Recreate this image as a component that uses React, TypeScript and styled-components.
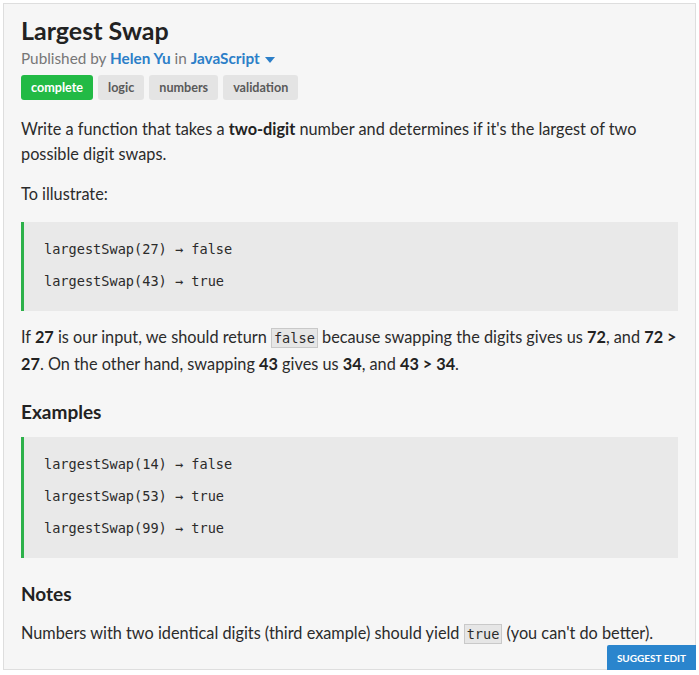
import styled, { createGlobalStyle } from 'styled-components';

const GlobalStyle = createGlobalStyle`
  body {
    margin: 0;
    background: #ffffff;
    font-family: Lato, "Open Sans", sans-serif;
  }
`;

const Panel = styled.div`
  position: relative;
  margin: 3px;
  padding: 11px 17px 22px;
  background: #f6f6f6;
  border: 1px solid #dedede;
  color: #2b2b2b;
`;

const Title = styled.h1`
  margin: 0;
  font-size: 25px;
  line-height: 30px;
  font-weight: 700;
  color: #222;
`;

const Byline = styled.div`
  margin-top: 2px;
  font-size: 15.3px;
  line-height: 22px;
  color: #777;

  a {
    color: #2c7fc8;
    font-weight: 700;
    text-decoration: none;
  }
`;

const Caret = styled.span`
  display: inline-block;
  margin-left: 5px;
  vertical-align: middle;
  border-left: 5px solid transparent;
  border-right: 5px solid transparent;
  border-top: 6px solid #2c7fc8;
`;

const Tags = styled.div`
  display: flex;
  gap: 5px;
  margin-top: 6px;
`;

const Tag = styled.span<{ $active?: boolean }>`
  display: inline-flex;
  align-items: center;
  height: 25px;
  padding: 0 10px;
  border-radius: 3px;
  font-size: 12.6px;
  font-weight: 700;
  background: ${(p) => (p.$active ? '#22ba45' : '#e4e4e4')};
  color: ${(p) => (p.$active ? '#fff' : '#5a5a5a')};
`;

const Para = styled.p<{ $gap?: number }>`
  margin: ${(p) => p.$gap ?? 15}px 0 0;
  font-size: 16.3px;
  line-height: 25px;

  b {
    font-weight: 700;
    color: #222;
  }
`;

const Heading = styled.h2`
  margin: 23px 0 0;
  font-size: 19px;
  line-height: 25px;
  font-weight: 700;
  color: #222;
`;

const CodeBlock = styled.div<{ $gap: number }>`
  margin-top: ${(p) => p.$gap}px;
  padding: 11px 20px 14px;
  background: #e9e9e9;
  border-left: 3px solid #2db14a;
  font-family: "DejaVu Sans Mono", "Liberation Mono", monospace;
  font-size: 13.6px;
  color: #2b2b2b;
`;

const CodeLine = styled.div`
  line-height: 32px;
  white-space: pre;
`;

const InlineCode = styled.code`
  padding: 1px 2px;
  background: #e6e6e6;
  border: 1px solid #c9c9c9;
  font-family: "DejaVu Sans Mono", "Liberation Mono", monospace;
  font-size: 13.6px;
  color: #2b2b2b;
`;

const SuggestButton = styled.button`
  position: absolute;
  right: -1px;
  bottom: -1px;
  height: 25px;
  padding: 0 10px;
  border: 0;
  border-radius: 2px 0 0 0;
  background: #2a85cd;
  color: #fff;
  font-family: Lato, sans-serif;
  font-size: 10px;
  font-weight: 700;
  text-transform: uppercase;
`;

const illustrate = ['largestSwap(27) → false', 'largestSwap(43) → true'];
const examples = [
  'largestSwap(14) → false',
  'largestSwap(53) → true',
  'largestSwap(99) → true',
];

const App = () => {
  return (
    <>
      <GlobalStyle />
      <Panel>
        <Title>Largest Swap</Title>
        <Byline>
          Published by <a href="#">Helen Yu</a> in <a href="#">JavaScript</a>
          <Caret />
        </Byline>
        <Tags>
          <Tag $active>complete</Tag>
          <Tag>logic</Tag>
          <Tag>numbers</Tag>
          <Tag>validation</Tag>
        </Tags>

        <Para $gap={16}>
          Write a function that takes a <b>two-digit</b> number and determines if it's the
          largest of two possible digit swaps.
        </Para>
        <Para>To illustrate:</Para>
        <CodeBlock $gap={16}>
          {illustrate.map((line) => (
            <CodeLine key={line}>{line}</CodeLine>
          ))}
        </CodeBlock>
        <Para $gap={13}>
          If <b>27</b> is our input, we should return <InlineCode>false</InlineCode> because
          swapping the digits gives us <b>72</b>, and <b>72 &gt; 27</b>. On the other hand,
          swapping <b>43</b> gives us <b>34</b>, and <b>43 &gt; 34</b>.
        </Para>

        <Heading>Examples</Heading>
        <CodeBlock $gap={13}>
          {examples.map((line) => (
            <CodeLine key={line}>{line}</CodeLine>
          ))}
        </CodeBlock>

        <Heading>Notes</Heading>
        <Para $gap={14}>
          Numbers with two identical digits (third example) should yield{' '}
          <InlineCode>true</InlineCode> (you can't do better).
        </Para>

        <SuggestButton>Suggest Edit</SuggestButton>
      </Panel>
    </>
  );
};

export default App;
